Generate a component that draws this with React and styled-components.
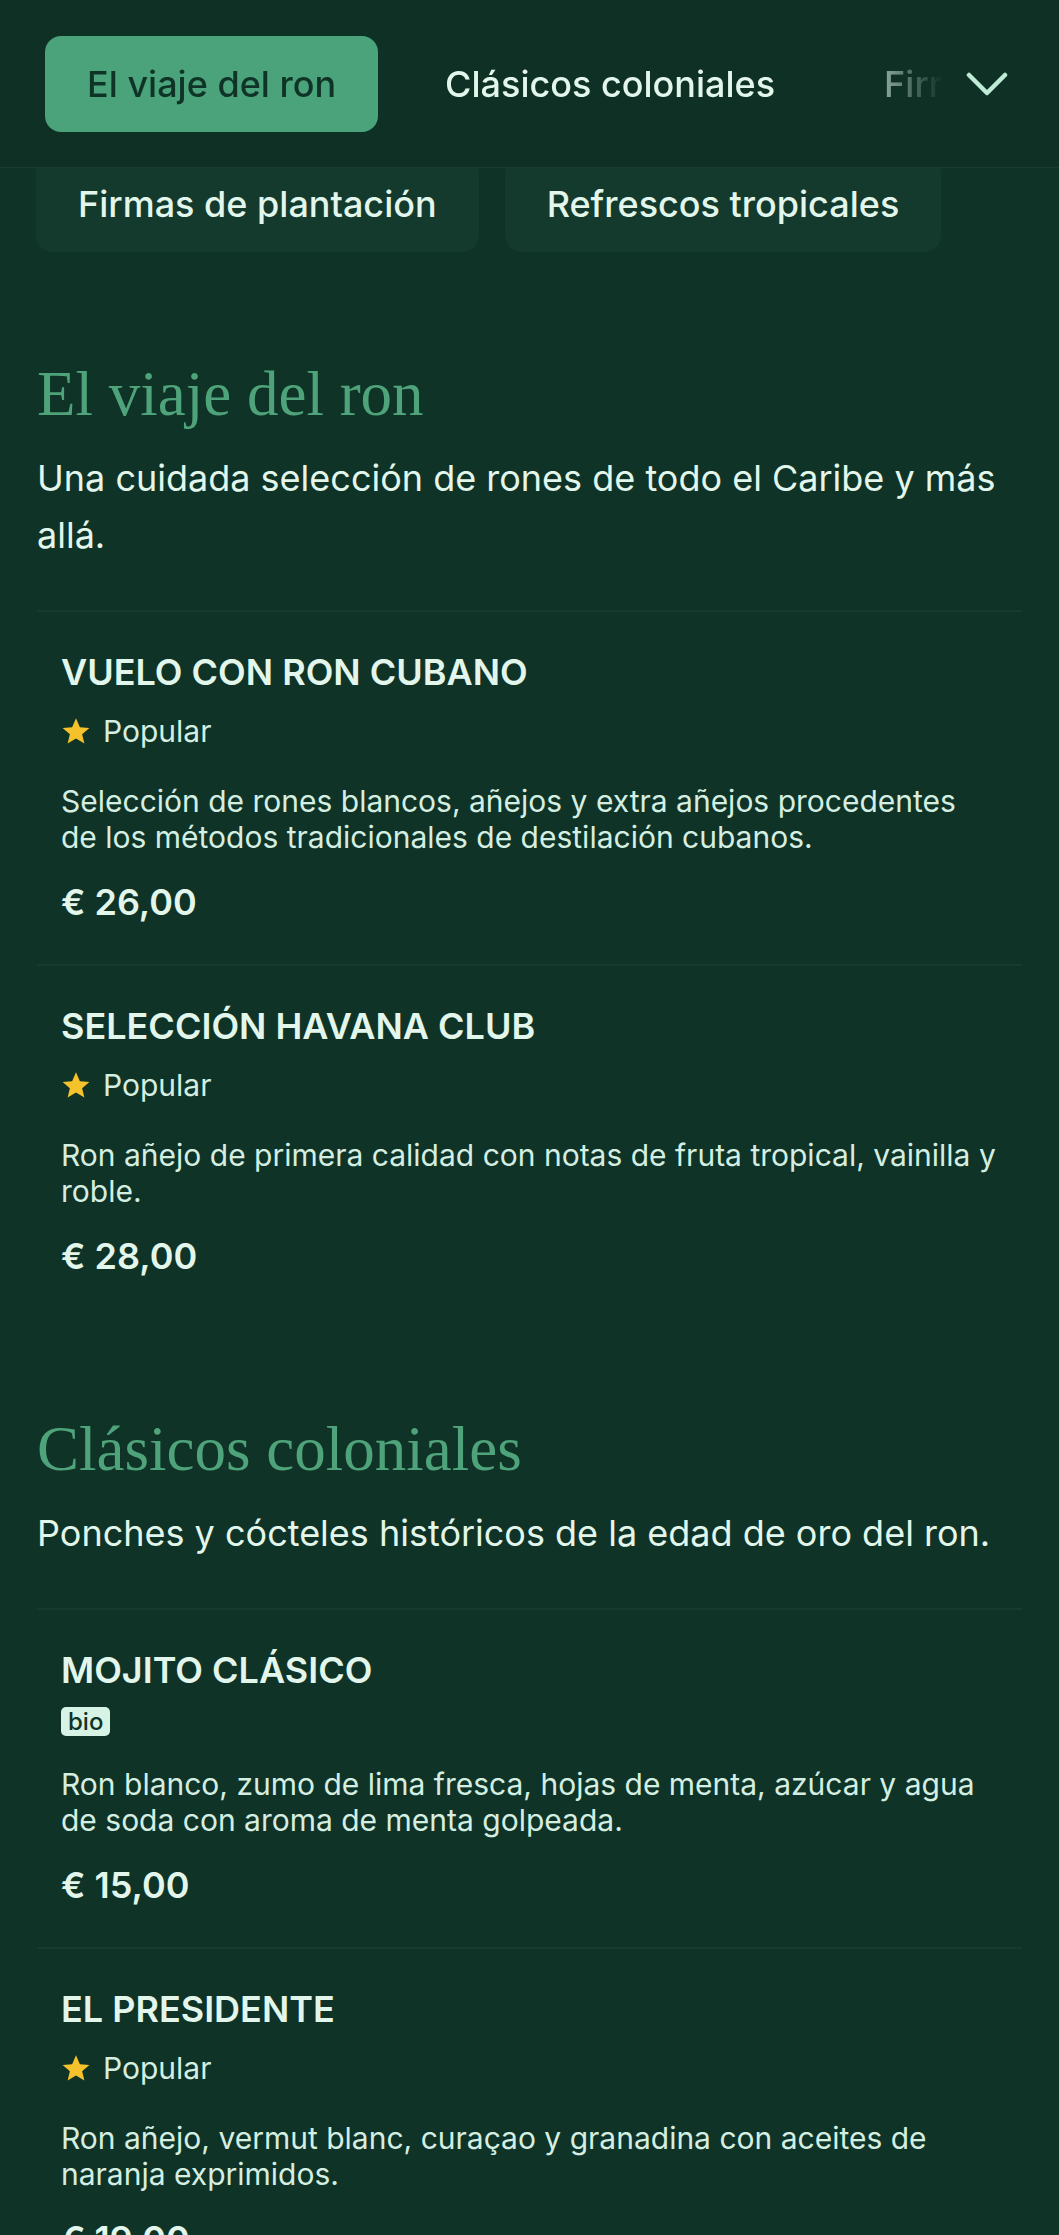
import React from 'react';
import styled, { createGlobalStyle } from 'styled-components';

const GlobalStyle = createGlobalStyle`
  html, body {
    margin: 0;
    padding: 0;
    background: #0f3326;
  }
  body {
    font-family: 'Inter', 'Noto Sans', sans-serif;
    color: #e2f6ec;
    -webkit-font-smoothing: antialiased;
  }
  * { box-sizing: border-box; }
`;

const Page = styled.div`
  min-height: 2235px;
  background: #0f3326;
`;

const Header = styled.header`
  display: flex;
  align-items: center;
  height: 168px;
  padding: 0 42px 0 45px;
  background: #0f3125;
  border-bottom: 1px solid rgba(255, 255, 255, 0.05);
`;

const TabStrip = styled.nav`
  flex: 1;
  display: flex;
  gap: 25px;
  overflow: hidden;
  -webkit-mask-image: linear-gradient(to right, #000 0, #000 calc(100% - 100px), transparent 100%);
  mask-image: linear-gradient(to right, #000 0, #000 calc(100% - 100px), transparent 100%);
`;

const Tab = styled.button`
  flex-shrink: 0;
  height: 96px;
  padding: 0 42px;
  border: 0;
  border-radius: 16px;
  font-family: inherit;
  font-size: 36px;
  font-weight: 500;
  background: ${(p) => (p.$active ? '#4aa37a' : 'transparent')};
  color: ${(p) => (p.$active ? '#0f3326' : '#e2f6ec')};
  cursor: pointer;
`;

const ChevronButton = styled.button`
  flex-shrink: 0;
  width: 60px;
  height: 60px;
  margin-left: 14px;
  display: flex;
  align-items: center;
  justify-content: center;
  background: transparent;
  border: 0;
  padding: 0;
  color: #bdebd6;
`;

// Grid of categories peeking under the header
const GridPeek = styled.div`
  overflow: hidden;
  height: 84px;
  padding: 0 36px;
`;

const CategoryGrid = styled.div`
  display: flex;
  gap: 26px;
  margin-top: -12px;
`;

const CategoryCard = styled.div`
  height: 96px;
  padding: 0 42px;
  display: flex;
  align-items: center;
  border-radius: 16px;
  background: #133a2d;
  font-size: 36px;
  font-weight: 500;
  color: #e2f6ec;
`;

const Section = styled.section`
  padding: ${(p) => (p.$first ? '107px' : '96px')} 37px 0;
`;

const SectionTitle = styled.h2`
  margin: 0;
  font-family: 'Liberation Serif', 'Times New Roman', serif;
  font-weight: 400;
  font-size: 63px;
  line-height: 70px;
  color: #4fa37b;
`;

const SectionIntro = styled.p`
  margin: 21px 0 0;
  font-size: 36px;
  line-height: 57px;
  color: #e2f6ec;
`;

const ItemList = styled.div`
  margin-top: 46px;
`;

const Item = styled.article`
  padding: 38px 24px 40px;
  border-top: 2px solid rgba(255, 255, 255, 0.04);
`;

const ItemName = styled.h3`
  margin: 0;
  font-size: 36px;
  line-height: 44px;
  font-weight: 600;
  text-transform: uppercase;
  color: #e2f6ec;
`;

const TagRow = styled.div`
  margin-top: 15px;
  display: flex;
  align-items: center;
  gap: 12px;
  height: ${(p) => (p.$badge ? '29px' : '44px')};
  font-size: 30px;
  color: #d5eee2;
`;

const Badge = styled.span`
  display: inline-flex;
  align-items: center;
  height: 29px;
  padding: 0 7px;
  border-radius: 5px;
  background: #d7f3e5;
  color: #0f3326;
  font-size: 24px;
  font-weight: 500;
`;

const Description = styled.p`
  margin: 30px 0 0;
  font-size: 30px;
  line-height: 36px;
  color: #d5eee2;
`;

const Price = styled.div`
  margin-top: 25px;
  font-size: 36px;
  line-height: 44px;
  font-weight: 600;
  color: #e2f6ec;
`;

const Star = () => (
  <svg width="30" height="30" viewBox="0 0 24 24" aria-hidden="true">
    <path
      d="M12 1.8l3.1 7.1 7.6.6-5.8 5 1.8 7.5L12 18l-6.7 4 1.8-7.5-5.8-5 7.6-.6z"
      fill="#f6c22b"
    />
  </svg>
);

const Chevron = () => (
  <svg width="42" height="24" viewBox="0 0 42 24" fill="none" aria-hidden="true">
    <path d="M3 3l18 18L39 3" stroke="currentColor" strokeWidth="4.5" strokeLinecap="round" strokeLinejoin="round" />
  </svg>
);

const tabs = ['El viaje del ron', 'Clásicos coloniales', 'Firmas de plantación', 'Refrescos tropicales'];

const sections = [
  {
    title: 'El viaje del ron',
    intro: 'Una cuidada selección de rones de todo el Caribe y más allá.',
    items: [
      {
        name: 'Vuelo con ron cubano',
        tag: 'popular',
        desc: 'Selección de rones blancos, añejos y extra añejos procedentes de los métodos tradicionales de destilación cubanos.',
        price: '€ 26,00',
      },
      {
        name: 'Selección Havana Club',
        tag: 'popular',
        desc: 'Ron añejo de primera calidad con notas de fruta tropical, vainilla y roble.',
        price: '€ 28,00',
      },
    ],
  },
  {
    title: 'Clásicos coloniales',
    intro: 'Ponches y cócteles históricos de la edad de oro del ron.',
    items: [
      {
        name: 'Mojito clásico',
        tag: 'bio',
        desc: 'Ron blanco, zumo de lima fresca, hojas de menta, azúcar y agua de soda con aroma de menta golpeada.',
        price: '€ 15,00',
      },
      {
        name: 'El Presidente',
        tag: 'popular',
        desc: 'Ron añejo, vermut blanc, curaçao y granadina con aceites de naranja exprimidos.',
        price: '€ 19,00',
      },
    ],
  },
];

const MenuItem = ({ item }) => (
  <Item>
    <ItemName>{item.name}</ItemName>
    {item.tag === 'bio' ? (
      <TagRow $badge>
        <Badge>bio</Badge>
      </TagRow>
    ) : (
      <TagRow>
        <Star />
        Popular
      </TagRow>
    )}
    <Description>{item.desc}</Description>
    <Price>{item.price}</Price>
  </Item>
);

export default function App() {
  return (
    <Page>
      <GlobalStyle />
      <Header>
        <TabStrip>
          {tabs.map((t, i) => (
            <Tab key={t} $active={i === 0}>{t}</Tab>
          ))}
        </TabStrip>
        <ChevronButton aria-label="Más categorías">
          <Chevron />
        </ChevronButton>
      </Header>
      <GridPeek>
        <CategoryGrid>
          <CategoryCard>Firmas de plantación</CategoryCard>
          <CategoryCard>Refrescos tropicales</CategoryCard>
        </CategoryGrid>
      </GridPeek>
      {sections.map((s, i) => (
        <Section key={s.title} $first={i === 0}>
          <SectionTitle>{s.title}</SectionTitle>
          <SectionIntro>{s.intro}</SectionIntro>
          <ItemList>
            {s.items.map((it) => (
              <MenuItem key={it.name} item={it} />
            ))}
          </ItemList>
        </Section>
      ))}
    </Page>
  );
}
